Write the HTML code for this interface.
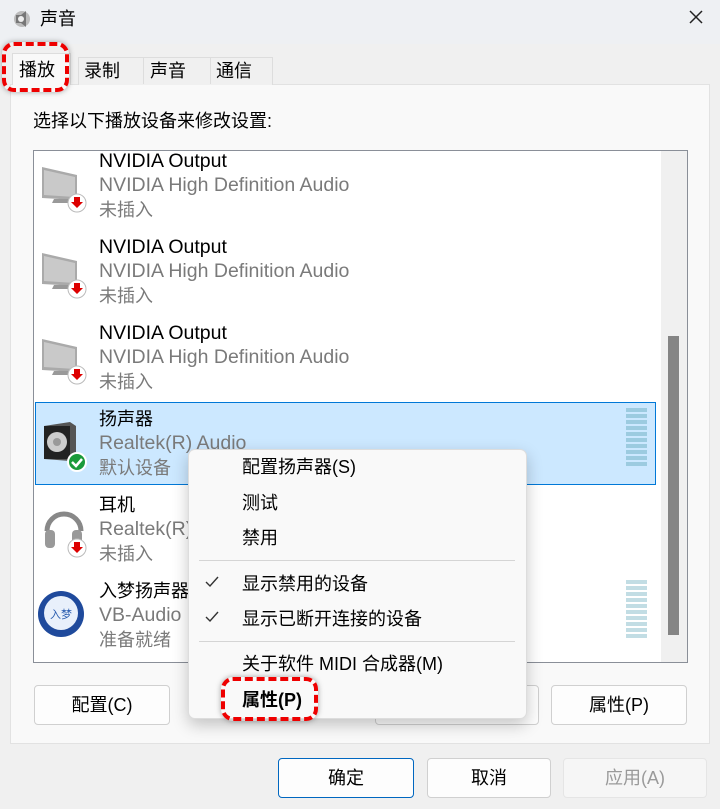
<!DOCTYPE html>
<html><head><meta charset="utf-8"><style>
*{margin:0;padding:0;box-sizing:border-box}
body{width:720px;height:809px;background:#f0f0f0;font-family:"Liberation Sans","Noto Sans CJK SC",sans-serif;position:relative;overflow:hidden;color:#000}
.a{position:absolute}
.t{font-size:18px;line-height:22px;white-space:nowrap}
.l{font-size:19.5px}
.g{color:#7a7a7a}
.btn{position:absolute;background:#fdfdfd;border:1px solid #d0d0d0;border-radius:4px;font-size:18px;text-align:center;line-height:38px}
.dash{position:absolute;border:4px dashed #e00;border-radius:12px;box-shadow:0 0 6px rgba(0,0,0,.35)}
</style></head><body>
<div class="a" style="left:0;top:0;width:720px;height:44px;background:#eef0f3"></div>
<svg class="a" style="left:12px;top:9px" width="20" height="20" viewBox="0 0 20 20"><circle cx="10" cy="10" r="8" fill="#bbb"/><path d="M4 6h5l5-4v16l-5-4H4z" fill="#777"/><circle cx="9" cy="10" r="3" fill="#eee"/></svg>
<div class="a t" style="left:40px;top:8px">声音</div>
<svg class="a" style="left:688px;top:9px" width="16" height="16" viewBox="0 0 16 16"><path d="M2 2L14 14M14 2L2 14" stroke="#222" stroke-width="1.5"/></svg>
<div class="a" style="left:10px;top:84px;width:700px;height:660px;background:#f9f9f9;border:1px solid #e2e2e2"></div>
<div class="a" style="left:12px;top:53px;width:59px;height:32px;background:#f9f9f9;border:1px solid #ddd;border-bottom:none"></div>
<div class="a t" style="left:19px;top:59px">播放</div>
<div class="a" style="left:78px;top:57px;width:195px;height:28px;border:1px solid #ddd;border-bottom:none;background:#f0f0f0"></div>
<div class="a" style="left:143px;top:57px;width:1px;height:27px;background:#ddd"></div>
<div class="a" style="left:210px;top:57px;width:1px;height:27px;background:#ddd"></div>
<div class="a t" style="left:84px;top:60px">录制</div>
<div class="a t" style="left:150px;top:60px">声音</div>
<div class="a t" style="left:216px;top:60px">通信</div>
<div class="dash" style="left:2px;top:42px;width:67px;height:50px"></div>
<div class="a t" style="left:33px;top:110px">选择以下播放设备来修改设置:</div>
<div class="a" style="left:33px;top:150px;width:655px;height:513px;background:#fff;border:1px solid #8a8f98"></div>
<div class="a" style="left:661px;top:151px;width:26px;height:511px;background:#f0f0f0"></div>
<div class="a" style="left:668px;top:336px;width:11px;height:299px;background:#858585"></div>
<div class="a" style="left:35px;top:402px;width:621px;height:83px;background:#cce8ff;border:1px solid #0078d7"></div>
<!-- items -->
<div class="a t l" style="left:99px;top:150px">NVIDIA Output</div><div class="a t l g" style="left:99px;top:174px">NVIDIA High Definition Audio</div><div class="a t g" style="left:99px;top:199px">未插入</div>
<div class="a t l" style="left:99px;top:236px">NVIDIA Output</div><div class="a t l g" style="left:99px;top:260px">NVIDIA High Definition Audio</div><div class="a t g" style="left:99px;top:285px">未插入</div>
<div class="a t l" style="left:99px;top:322px">NVIDIA Output</div><div class="a t l g" style="left:99px;top:346px">NVIDIA High Definition Audio</div><div class="a t g" style="left:99px;top:371px">未插入</div>
<div class="a t" style="left:99px;top:408px">扬声器</div><div class="a t l g" style="left:99px;top:432px">Realtek(R) Audio</div><div class="a t g" style="left:99px;top:457px">默认设备</div>
<div class="a t" style="left:99px;top:494px">耳机</div><div class="a t l g" style="left:99px;top:518px">Realtek(R)</div><div class="a t g" style="left:99px;top:543px">未插入</div>
<div class="a t" style="left:99px;top:580px">入梦扬声器</div><div class="a t l g" style="left:99px;top:604px">VB-Audio</div><div class="a t g" style="left:99px;top:629px">准备就绪</div>
<!-- icons -->
<svg class="a" style="left:40px;top:165px" width="50" height="50" viewBox="0 0 50 50"><path d="M2 2l35 8v25l-35-2z" fill="#aaa"/><path d="M4 5l31 7v20l-31-2z" fill="#c9c9c9"/><path d="M14 34h14l2 4H12z" fill="#999"/><circle cx="37" cy="38" r="9" fill="#fff" stroke="#bbb"/><path d="M34 32h6v5h3l-6 6-6-6h3z" fill="#d00"/></svg>
<svg class="a" style="left:40px;top:251px" width="50" height="50" viewBox="0 0 50 50"><path d="M2 2l35 8v25l-35-2z" fill="#aaa"/><path d="M4 5l31 7v20l-31-2z" fill="#c9c9c9"/><path d="M14 34h14l2 4H12z" fill="#999"/><circle cx="37" cy="38" r="9" fill="#fff" stroke="#bbb"/><path d="M34 32h6v5h3l-6 6-6-6h3z" fill="#d00"/></svg>
<svg class="a" style="left:40px;top:337px" width="50" height="50" viewBox="0 0 50 50"><path d="M2 2l35 8v25l-35-2z" fill="#aaa"/><path d="M4 5l31 7v20l-31-2z" fill="#c9c9c9"/><path d="M14 34h14l2 4H12z" fill="#999"/><circle cx="37" cy="38" r="9" fill="#fff" stroke="#bbb"/><path d="M34 32h6v5h3l-6 6-6-6h3z" fill="#d00"/></svg>
<svg class="a" style="left:42px;top:420px" width="48" height="55" viewBox="0 0 48 55"><path d="M2 6l26-4 6 4v32l-6 3-26-2z" fill="#555"/><path d="M2 6h26v33H2z" fill="#222"/><circle cx="15" cy="22" r="10" fill="#ccc"/><circle cx="15" cy="22" r="4" fill="#999"/><circle cx="35" cy="42" r="9" fill="#1a9a3a" stroke="#fff" stroke-width="2"/><path d="M30 42l4 4 6-7" stroke="#fff" stroke-width="2.5" fill="none"/></svg>
<svg class="a" style="left:42px;top:506px" width="48" height="55" viewBox="0 0 48 55"><path d="M5 25a17 17 0 0 1 34 0" stroke="#888" stroke-width="5" fill="none"/><rect x="3" y="24" width="10" height="18" rx="4" fill="#999"/><rect x="30" y="24" width="10" height="18" rx="4" fill="#999"/><circle cx="35" cy="42" r="9" fill="#fff" stroke="#bbb"/><path d="M32 36h6v5h3l-6 6-6-6h3z" fill="#d00"/></svg>
<svg class="a" style="left:37px;top:590px" width="48" height="48" viewBox="0 0 48 48"><circle cx="24" cy="24" r="23" fill="#1f4a9c"/><circle cx="24" cy="23" r="17" fill="#e8f0fb"/><text x="24" y="28" font-size="11" text-anchor="middle" fill="#2a5db0" font-family="Noto Sans CJK SC">入梦</text></svg>
<!-- meters -->
<div class="a" style="left:626px;top:408px;width:21px;height:59px;background:repeating-linear-gradient(#9ccbe0 0 4px,#cce8ff 4px 6px)"></div>
<div class="a" style="left:626px;top:580px;width:21px;height:59px;background:repeating-linear-gradient(#c2dde4 0 4px,#fff 4px 6px)"></div>
<!-- buttons -->
<div class="btn" style="left:34px;top:685px;width:136px;height:40px">配置(C)</div>
<div class="btn" style="left:375px;top:685px;width:164px;height:40px"></div>
<div class="btn" style="left:551px;top:685px;width:136px;height:40px">属性(P)</div>
<div class="btn" style="left:278px;top:758px;width:136px;height:40px;border-color:#0067c0">确定</div>
<div class="btn" style="left:427px;top:758px;width:124px;height:40px">取消</div>
<div class="btn" style="left:563px;top:758px;width:144px;height:40px;background:#f6f6f6;border-color:#e5e5e5;color:#9a9a9a">应用(A)</div>
<!-- menu -->
<div class="a" style="left:188px;top:449px;width:339px;height:270px;background:#f9f9f9;border:1px solid #ddd;border-radius:7px;box-shadow:0 6px 16px rgba(0,0,0,.22)"></div>
<div class="a t" style="left:242px;top:456px">配置扬声器(S)</div>
<div class="a t" style="left:242px;top:492px">测试</div>
<div class="a t" style="left:242px;top:527px">禁用</div>
<div class="a" style="left:199px;top:560px;width:316px;height:1px;background:#d5d5d5"></div>
<svg class="a" style="left:205px;top:576px" width="14" height="12" viewBox="0 0 14 12"><path d="M1 6l4 4 8-9" stroke="#333" stroke-width="1.4" fill="none"/></svg>
<div class="a t" style="left:242px;top:573px">显示禁用的设备</div>
<svg class="a" style="left:205px;top:611px" width="14" height="12" viewBox="0 0 14 12"><path d="M1 6l4 4 8-9" stroke="#333" stroke-width="1.4" fill="none"/></svg>
<div class="a t" style="left:242px;top:608px">显示已断开连接的设备</div>
<div class="a" style="left:199px;top:641px;width:316px;height:1px;background:#d5d5d5"></div>
<div class="a t" style="left:242px;top:653px">关于软件 MIDI 合成器(M)</div>
<div class="a t" style="left:242px;top:689px;font-weight:bold">属性(P)</div>
<div class="dash" style="left:221px;top:677px;width:97px;height:44px"></div>
</body></html>
